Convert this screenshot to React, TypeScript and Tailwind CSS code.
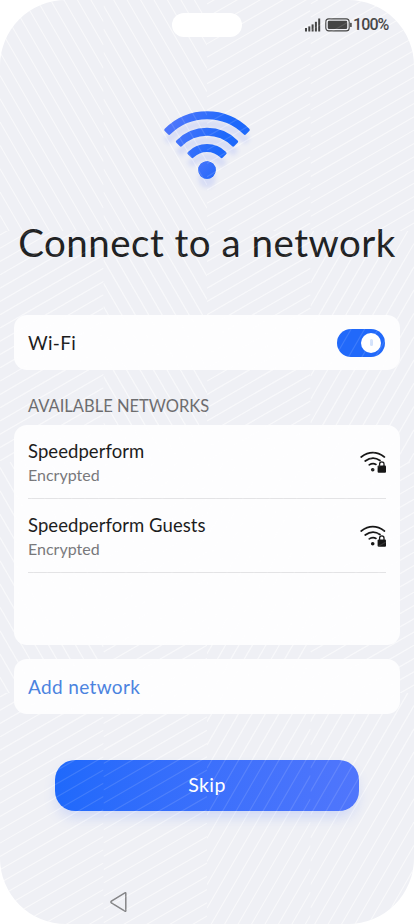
type Hatch = 'down' | 'flat' | 'steep';

const networks = [
  { name: 'Speedperform', status: 'Encrypted' },
  { name: 'Speedperform Guests', status: 'Encrypted' },
];

// Hatch direction of every wallpaper tile, row by row
const tiles: Hatch[][] = [
  ['down', 'down', 'flat', 'flat'],
  ['flat', 'down', 'flat', 'steep'],
  ['down', 'flat', 'steep', 'flat'],
  ['flat', 'flat', 'steep', 'steep'],
];

const TILE_W = 103.5;
const TILE_H = 231;

function hatchPath(kind: Hatch) {
  let d = '';
  if (kind === 'flat') {
    for (let y = 4; y < TILE_H + 60; y += 13.28) d += `M0 ${y}L${TILE_W} ${y - 59.76}`;
  } else if (kind === 'down') {
    for (let y = -1.5; y < TILE_H + 180; y += 23.3) d += `M0 ${y - 179.3}L${TILE_W} ${y}`;
  } else {
    for (let y = 5.4; y < TILE_H + 180; y += 23.3) d += `M0 ${y}L${TILE_W} ${y - 179.3}`;
  }
  return d;
}

function Wallpaper({ className }: { className: string }) {
  return (
    <svg viewBox="0 0 414 924" className={`pointer-events-none absolute inset-0 h-full w-full ${className}`}>
      {tiles.map((row, r) =>
        row.map((kind, c) => (
          <svg key={`${r}-${c}`} x={c * TILE_W} y={r * TILE_H} width={TILE_W} height={TILE_H} overflow="hidden">
            <path d={hatchPath(kind)} stroke="#fff" strokeWidth="1.2" fill="none" />
          </svg>
        ))
      )}
    </svg>
  );
}

function StatusBar() {
  return (
    <div className="flex h-[50px] items-center justify-end pr-[25.5px] text-[#454545]">
      <svg width="16" height="14" viewBox="0 0 16 14" className="mr-[4px]" fill="currentColor">
        <rect x="0" y="10" width="2" height="3.5" />
        <rect x="3.3" y="8.4" width="2" height="5.1" />
        <rect x="6.6" y="6.4" width="2" height="7.1" />
        <rect x="9.9" y="3.8" width="2" height="9.7" />
        <rect x="13.2" y="0.5" width="2" height="13" />
      </svg>
      <svg width="28" height="14" viewBox="0 0 28 14">
        <rect x="0.8" y="0.9" width="23.4" height="12" rx="3" fill="none" stroke="currentColor" strokeWidth="1.1" />
        <rect x="2.8" y="2.8" width="19.4" height="8.2" rx="1.2" fill="currentColor" />
        <rect x="25.1" y="4.8" width="1.6" height="4.2" rx="0.6" fill="currentColor" />
      </svg>
      <span className="font-['Roboto',sans-serif] text-[16px] leading-5 font-medium tracking-[-0.9px]">100%</span>
    </div>
  );
}

// One arc of the logo, spanning 45 degrees either side of straight up
function beam(r: number) {
  const cx = 206.5;
  const cy = 171;
  const inner = (r - 2.3) * Math.SQRT1_2;
  const outer = (r + 2.3) * Math.SQRT1_2;
  return [
    `M${cx - outer} ${cy - outer}`,
    `A${r + 2.3} ${r + 2.3} 0 0 1 ${cx + outer} ${cy - outer}`,
    `L${cx + inner} ${cy - inner}`,
    `A${r - 2.3} ${r - 2.3} 0 0 0 ${cx - inner} ${cy - inner}Z`,
  ].join('');
}

function WifiBeams({ color }: { color: string }) {
  return (
    <g fill={color} stroke={color} strokeWidth="3.4" strokeLinejoin="round">
      <path d={beam(55.8)} />
      <path d={beam(39.3)} />
      <path d={beam(23)} />
      <circle cx="206.5" cy="170" r="8.7" stroke="none" />
    </g>
  );
}

function WifiLogo() {
  return (
    <svg width="104" height="96" viewBox="154.5 103 104 96" className="mx-auto mt-[53px] block overflow-visible">
      <defs>
        <linearGradient id="beam" gradientUnits="userSpaceOnUse" x1="168" y1="130" x2="218" y2="150">
          <stop offset="0" stopColor="#4d76fb" />
          <stop offset="1" stopColor="#1e69fb" />
        </linearGradient>
        <linearGradient id="dot" x1="0" y1="0" x2="1" y2="1">
          <stop offset="0" stopColor="#4775fb" />
          <stop offset="1" stopColor="#2468fa" />
        </linearGradient>
        <filter id="glow" x="-20%" y="-20%" width="140%" height="160%">
          <feGaussianBlur stdDeviation="2" />
        </filter>
      </defs>
      <g transform="translate(0 9)" opacity="0.13" filter="url(#glow)">
        <WifiBeams color="#3f62f5" />
      </g>
      <WifiBeams color="url(#beam)" />
      <circle cx="206.5" cy="170" r="8.7" fill="url(#dot)" />
    </svg>
  );
}

function SecuredWifiIcon() {
  return (
    <svg width="28" height="24" viewBox="0 0 28 24" className="mb-[2px] text-[#161616]">
      <g fill="none" stroke="currentColor" strokeWidth="1.7" strokeLinecap="round">
        <path d="M3.2 7Q14.8 -1.6 26.4 7" />
        <path d="M7.2 11Q14.8 5.3 22 10.5" />
        <path d="M11.2 14.9Q14.8 12.6 18 14.4" />
      </g>
      <circle cx="14.7" cy="19.8" r="1.8" fill="currentColor" />
      <rect x="19.6" y="15.6" width="8.4" height="7.2" rx="1" fill="currentColor" />
      <path d="M21.6 15.9v-1.8a2.2 2.2 0 0 1 4.4 0V15.9" fill="none" stroke="currentColor" strokeWidth="1.3" />
    </svg>
  );
}

export default function App() {
  return (
    <div className="h-[924px] w-[414px] bg-white font-['Lato',sans-serif]">
      <div className="relative h-full overflow-hidden rounded-[66px] bg-[#eff0f5]">
        <Wallpaper className="opacity-50" />
        <div className="absolute top-[13px] left-[172px] h-6 w-[70px] rounded-full bg-white" />

        <div className="relative flex h-full flex-col">
          <StatusBar />
          <WifiLogo />
          <h1 className="mt-[17px] text-center text-[38.5px] leading-[52px] tracking-[0.5px] whitespace-nowrap text-[#202122]">
            Connect to a network
          </h1>

          <section className="mx-[14px] mt-[47px] flex h-[55px] items-center justify-between rounded-[13px] bg-[#fdfdfe] pr-[15px] pl-[14px]">
            <span className="pt-[2px] text-[19px] tracking-[0.3px] text-[#1b1b1b]">Wi-Fi</span>
            <div className="flex h-7 w-12 items-center justify-end rounded-full bg-[#2169fa] pr-1">
              <div className="flex h-5 w-5 items-center justify-center rounded-full bg-white">
                <div className="h-[7px] w-[3px] rounded-full bg-[#d3e2fb]" />
              </div>
            </div>
          </section>

          <h2 className="mt-[24px] ml-[28px] text-[16.5px] leading-[24px] text-[#6c6c6e]">AVAILABLE NETWORKS</h2>

          <section className="mx-[14px] mt-[7px] h-[220px] shrink-0 rounded-[13px] bg-[#fdfdfe] px-[14px]">
            {networks.map((n) => (
              <div key={n.name} className="flex h-[74px] items-center justify-between border-b border-[#e3e3e5] pt-[2px]">
                <div>
                  <div className="text-[18.5px] leading-6 tracking-[0.06px] text-[#1b1b1b]">{n.name}</div>
                  <div className="text-[16px] leading-6 text-[#77777a]">{n.status}</div>
                </div>
                <SecuredWifiIcon />
              </div>
            ))}
          </section>

          <section className="mx-[14px] mt-[14px] flex h-[55px] shrink-0 items-center rounded-[13px] bg-[#fdfdfe] pl-[14px]">
            <span className="pt-[2px] text-[19px] tracking-[0.35px] text-[#4a82df]">Add network</span>
          </section>

          <button className="mx-auto mt-[46px] h-[51px] w-[304px] shrink-0 rounded-[20px] bg-linear-to-r from-[#1f69fb] to-[#5076fc] pb-[2px] text-[19.5px] tracking-[0.4px] text-white shadow-[0_8px_14px_-2px_rgba(80,120,250,0.2)]">
            Skip
          </button>

          <svg width="20" height="22" viewBox="0 0 20 22" className="mt-[80px] ml-[109px] shrink-0">
            <path
              d="M16.8 2.3V19.7Q16.8 20.6 15.9 20.1L2.4 11.8Q1.4 11 2.4 10.2L15.9 1.9Q16.8 1.4 16.8 2.3Z"
              fill="none"
              stroke="#858587"
              strokeWidth="1.5"
            />
          </svg>
        </div>

        <Wallpaper className="opacity-12" />
      </div>
    </div>
  );
}
